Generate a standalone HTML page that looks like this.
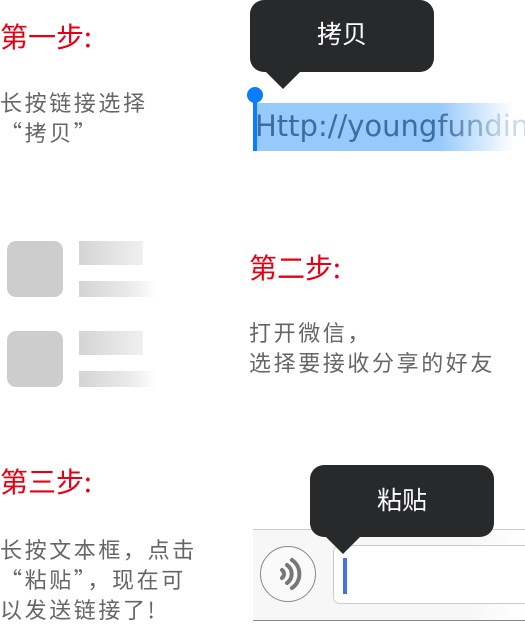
<!DOCTYPE html>
<html><head><meta charset="utf-8"><style>
*{margin:0;padding:0;box-sizing:border-box}
body{width:525px;height:622px;background:#fff;position:relative;overflow:hidden;font-family:"Noto Sans CJK SC",sans-serif}
.t{position:absolute;color:#e60012;font-size:28px;line-height:30px;white-space:nowrap}
.p{position:absolute;color:#666;font-size:22px;line-height:30px;letter-spacing:2.6px;white-space:nowrap}
.tip{position:absolute;background:#28292b;border-radius:14px;color:#fff;font-size:25px;text-align:center;line-height:66px}
.arr{position:absolute;width:0;height:0;border-left:18px solid transparent;border-right:18px solid transparent;border-top:18px solid #28292b}
.sq{position:absolute;left:7px;width:56px;height:56px;border-radius:9px;background:#cdcdcd}
.b1{position:absolute;left:79px;width:64px;height:24px;background:linear-gradient(90deg,#d4d4d4,#f0f0f0)}
.b2{position:absolute;left:79px;width:78px;height:16px;background:linear-gradient(90deg,#d4d4d4,#e8e8e8 60%,#fff)}
</style></head><body>
<div class="t" style="left:0;top:21px">第一步:</div>
<div class="p" style="left:0;top:87px">长按链接选择<br>“拷贝”</div>

<div class="tip" style="left:250px;top:0;width:184px;height:72px">拷贝</div>
<div class="arr" style="left:265px;top:71px"></div>
<div style="position:absolute;left:253px;top:103px;width:272px;height:48px;background:linear-gradient(90deg,#96c9fc 0%,#96c9fc 68%,#fff 96%)"></div>
<div style="position:absolute;left:255px;top:103px;height:48px;line-height:46px;font-size:29px;color:#3f6c9c;white-space:nowrap;font-family:'DejaVu Sans','Liberation Sans',sans-serif;-webkit-mask-image:linear-gradient(90deg,#000 0,#000 180px,rgba(0,0,0,.25) 245px);">Http://youngfundin</div>
<div style="position:absolute;left:253px;top:95px;width:4px;height:56px;background:#0a7cff"></div>
<div style="position:absolute;left:247px;top:87px;width:16px;height:16px;border-radius:50%;background:#0a7cff"></div>

<div class="sq" style="top:241px"></div>
<div class="b1" style="top:241px"></div>
<div class="b2" style="top:281px"></div>
<div class="sq" style="top:331px"></div>
<div class="b1" style="top:331px"></div>
<div class="b2" style="top:371px"></div>

<div class="t" style="left:249px;top:252px">第二步:</div>
<div class="p" style="left:249px;top:317px">打开微信，<br>选择要接收分享的好友</div>

<div class="t" style="left:0;top:466px">第三步:</div>
<div class="p" style="left:0;top:534px">长按文本框，点击<br>“粘贴”，现在可<br>以发送链接了!</div>

<div style="position:absolute;left:253px;top:529px;width:272px;height:92px;background:linear-gradient(90deg,#f7f7f7 80%,#fff);border-top:1px solid #ccc;border-bottom:1px solid #888"></div>
<div style="position:absolute;left:260px;top:546px;width:56px;height:56px;border-radius:50%;border:1px solid #888;background:#fafafa"></div>
<svg style="position:absolute;left:260px;top:546px" width="56" height="56" viewBox="0 0 56 56" fill="none" stroke="#777" stroke-linecap="round">
<path d="M22 24 a5 5 0 0 1 0 8" stroke-width="4"/>
<path d="M27 19 a11 11 0 0 1 0 18" stroke-width="4"/>
<path d="M32 14 a17 17 0 0 1 0 28" stroke-width="4"/>
</svg>
<div style="position:absolute;left:333px;top:545px;width:200px;height:59px;border:1px solid #ccc;border-radius:7px;background:#fff"></div>
<div style="position:absolute;left:343px;top:558px;width:4px;height:36px;background:#4a6cf0"></div>
<div class="tip" style="left:310px;top:465px;width:184px;height:72px;line-height:68px">粘贴</div>
<div class="arr" style="left:325px;top:536px"></div>
</body></html>
